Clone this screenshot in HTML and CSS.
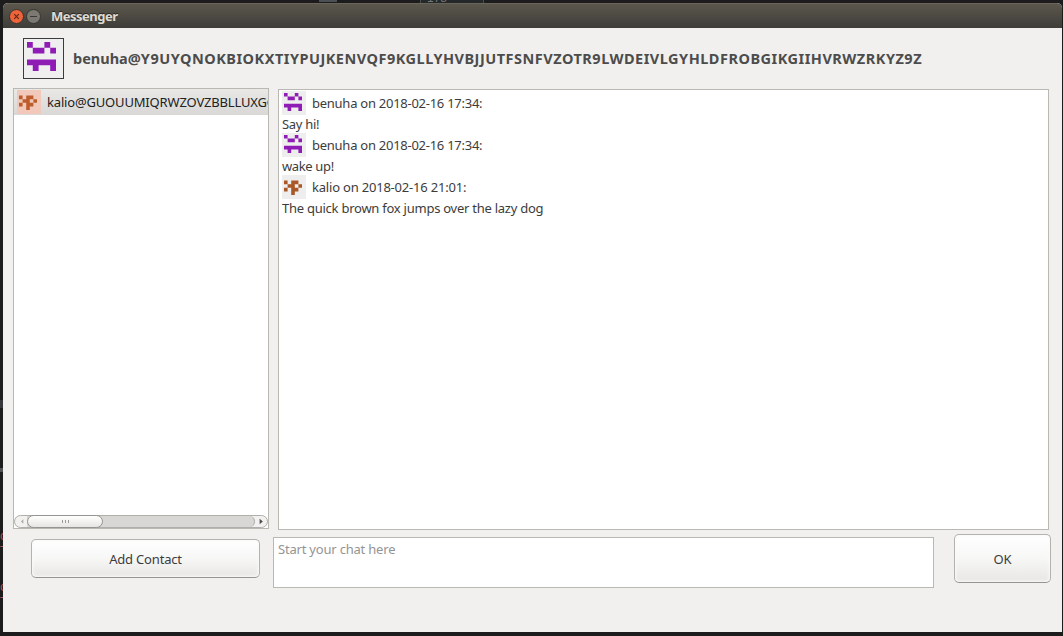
FILE: index.html
```html
<!DOCTYPE html>
<html lang="en">
<head>
<meta charset="utf-8">
<title>Messenger</title>
<link rel="stylesheet" href="styles.css">
</head>
<body>
<svg width="0" height="0" class="defs" aria-hidden="true">
  <symbol id="benuha" viewBox="0 0 5 5"><path d="M0 0h1v1H0zM3 0h1v1H3zM1 1h2v1H1zM4 1h1v1H4zM0 3h5v2H4V4H2v1H1V4H0z"/></symbol>
  <symbol id="kalio" viewBox="0 0 5 5"><path d="M0 1h1v1H0zM2 1h2v1H3v1h1v1H3v1H2V3H1V2h1zM4 2h1v1H4zM0 3h1v1H0z"/></symbol>
</svg>
<div class="desktop">
  <div class="tab-mark"></div><div class="tab-shape"><span>178</span></div>
  <div class="edge"><span class="e1"></span><span class="e2"></span><i class="c1">c</i><i class="c2">T</i><i class="c3">c</i><i class="c4">T</i></div>
  <div class="window">
    <header class="titlebar">
      <svg class="control" viewBox="0 0 15 15"><circle cx="7.5" cy="7.5" r="7" fill="#ef633a" stroke="#37342f"/><path d="M5.2 5.2l4.6 4.6M9.8 5.2L5.2 9.8" stroke="#5c2b1b" stroke-width="1.2"/></svg>
      <svg class="control" viewBox="0 0 15 15"><circle cx="7.5" cy="7.5" r="7" fill="#7b7972" stroke="#37342f"/><path d="M4 7.5h7" stroke="#3a3934" stroke-width="1.2"/></svg>
      <h1 class="title">Messenger</h1>
    </header>
    <section class="identity">
      <div class="avatar"><svg><use href="#benuha"/></svg></div>
      <div class="address">benuha@<span class="key">Y9UYQNOKBIOKXTIYPUJKENVQF9KGLLYHVBJJUTFSNFVZOTR9LWDEIVLGYHLDFROBGIKGIIHVRWZRKYZ9Z</span></div>
    </section>
    <main class="panes">
      <aside class="contacts">
        <div class="contact"><div class="thumb pink"><svg><use href="#kalio"/></svg></div><span class="contact-name">kalio@GUOUUMIQRWZOVZBBLLUXGOK</span></div>
        <div class="scrollbar">
          <svg class="arrow" viewBox="0 0 12 12"><path d="M8.5 3.5v5L6 6z" fill="#aaa8a5"/></svg>
          <div class="track"><div class="thumbbar"><i></i><i></i><i></i></div></div>
          <svg class="arrow" viewBox="0 0 12 12"><path d="M4.5 3v6l3.5-3z" fill="#4c4c4c"/></svg>
        </div>
      </aside>
      <section class="chat">
        <div class="meta"><div class="thumb"><svg><use href="#benuha"/></svg></div><span class="by1">benuha on 2018-02-16 17:34:</span></div>
        <p class="msg m1">Say hi!</p>
        <div class="meta"><div class="thumb"><svg><use href="#benuha"/></svg></div><span class="by1">benuha on 2018-02-16 17:34:</span></div>
        <p class="msg m2">wake up!</p>
        <div class="meta"><div class="thumb brown"><svg><use href="#kalio"/></svg></div><span class="by2">kalio on 2018-02-16 21:01:</span></div>
        <p class="msg m3">The quick brown fox jumps over the lazy dog</p>
      </section>
    </main>
    <footer class="compose">
      <button class="btn add"><span>Add Contact</span></button>
      <div class="entry"><span>Start your chat here</span></div>
      <button class="btn ok"><span>OK</span></button>
    </footer>
  </div>
</div>
</body>
</html>
```
FILE: styles.css
```css
* { box-sizing: border-box; }
body { margin: 0; font: 13px/21px "Noto Sans", sans-serif; color: #3c3c3c; }
.defs { position: absolute; }
.desktop { position: relative; width: 1063px; height: 636px; padding: 3px 1px 4px 3px; background: #1c1c1c; overflow: hidden; }
.tab-mark { position: absolute; left: 319px; top: 0; width: 18px; height: 2px; background: #4b5055; }
.tab-shape { position: absolute; left: 420px; top: 0; width: 64px; height: 3px; padding-left: 6px; border: 1px solid #4b4b49; border-width: 0 1px; background: #24282b; color: #777; font: 12px/0 "Liberation Sans", sans-serif; overflow: hidden; }
.tab-shape span { position: relative; top: -2px; }
.edge { position: absolute; left: 0; top: 0; width: 3px; height: 636px; overflow: hidden; }
.e1, .e2 { position: absolute; left: 0; width: 3px; }
.e1 { top: 400px; height: 8px; background: #35373a; }
.e2 { top: 468px; height: 4px; background: #505356; }
.edge i { position: absolute; left: 0; color: #bd4b48; font: 13px/16px "Liberation Sans", sans-serif; }
.c1 { top: 528px; } .c2 { top: 543px; } .c3 { top: 579px; } .c4 { top: 594px; }
.window { height: 629px; background: #f1f0ee; border-radius: 5px 5px 0 0; overflow: hidden; }
.titlebar { display: flex; align-items: center; height: 25px; padding: 0 0 0 6px; gap: 2px; background: linear-gradient(#5b574d, #3e3d38); border-top: 1px solid #69655b; }
.control { width: 15px; height: 15px; }
.title { margin: 1px 0 0 8px; font-size: 13px; font-weight: 700; letter-spacing: -.5px; color: #dfdbd2; text-shadow: 0 -1px #282824; }
.identity { display: flex; align-items: center; height: 61px; padding: 0 0 0 20px; gap: 9px; }
.avatar { width: 41px; height: 41px; border: 1px solid #3c3c3c; padding: 3px; background: #efefef; }
.avatar svg { display: block; width: 29px; height: 29px; fill: #8e1cb5; }
.address { font-size: 14.5px; font-weight: 700; color: #4c4c4c; white-space: nowrap; }
.key { letter-spacing: .5px; }
.panes { display: flex; gap: 9px; padding: 0 0 0 10px; height: 442px; }
.contacts { width: 256px; height: 441px; margin-top: -1px; display: flex; flex-direction: column; justify-content: space-between; background: #fff; border: 1px solid #bab8b3; }
.contact { display: flex; align-items: center; gap: 6px; height: 26px; padding-left: 3px; background: linear-gradient(#e8e8e6, #d9d8d6); overflow: hidden; white-space: nowrap; color: #222; }
.contact-name { letter-spacing: -.17px; }
.thumb { flex: none; width: 24px; height: 24px; background: #eee; padding: 2px; }
.thumb svg { display: block; width: 18px; height: 18px; fill: #8e1cb5; }
.pink { background: #f1c8ba; } .pink svg { fill: #bd5d2d; } .brown svg { fill: #aa5727; }
.scrollbar { height: 13px; display: flex; border: 1px solid #b0aeaa; border-radius: 7px; background: #f2f1f0; }
.arrow { width: 12px; height: 11px; flex: none; }
.track { flex: 1; background: #d8d7d5; border-radius: 0 6px 6px 0; border-right: 1px solid #aaa; }
.thumbbar { display: flex; align-items: center; justify-content: center; gap: 2px; width: 76px; height: 13px; margin-top: -1px; border: 1px solid #969490; border-radius: 7px; background: linear-gradient(#fff, #e6e5e3); }
.thumbbar i { width: 1px; height: 3px; background: #999; }
.chat { width: 771px; height: 441px; background: #fff; border: 1px solid #bab8b3; padding: 1px 3px; }
.meta { display: flex; gap: 6px; height: 24px; align-items: center; }
.by1 { letter-spacing: -.26px; } .by2 { letter-spacing: -.2px; }
.msg { margin: 0; height: 18px; line-height: 18px; }
.m1 { letter-spacing: -.3px; } .m2 { letter-spacing: -.36px; } .m3 { letter-spacing: -.25px; }
.compose { display: flex; align-items: flex-start; padding: 4px 0 0 28px; }
.btn { font: inherit; color: #3c3c3c; padding: 1px 0 0; border: 1px solid #b4b2ae; border-bottom-color: #969490; border-radius: 5px; background: linear-gradient(#fff, #f7f7f6 50%, #e7e6e4); box-shadow: inset 0 0 3px 1px #fafafa; }
.add { width: 229px; height: 39px; margin-top: 4px; letter-spacing: -.18px; }
.entry { width: 661px; height: 51px; margin: 2px 20px 0 13px; padding: 1px 4px; background: #fff; border: 1px solid #bab8b3; color: #949494; letter-spacing: -.2px; }
.ok { width: 97px; height: 49px; margin-top: -1px; }
```
